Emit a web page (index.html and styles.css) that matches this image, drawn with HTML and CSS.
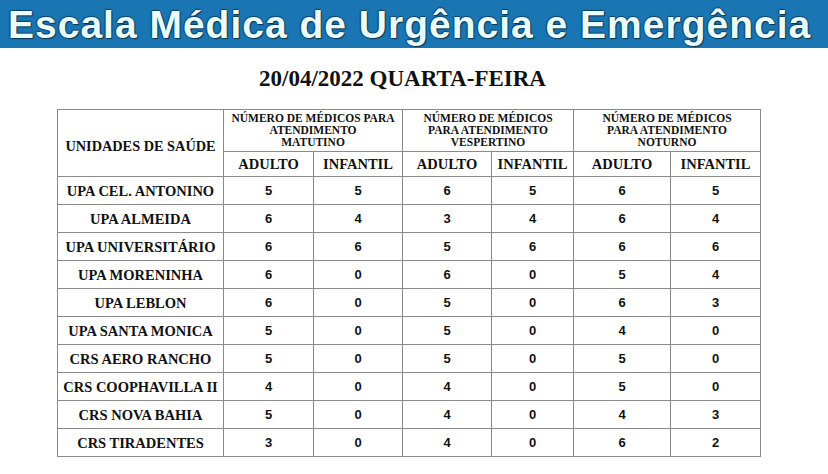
FILE: index.html
```html
<!DOCTYPE html>
<html lang="pt-BR">
<head>
<meta charset="utf-8">
<title>Escala Médica de Urgência e Emergência</title>
<link rel="stylesheet" href="styles.css">
</head>
<body>
<header class="banner"><h1 class="banner-title">Escala Médica de Urgência e Emergência</h1></header>
<main class="content">
  <h2 class="date">20/04/2022 QUARTA-FEIRA</h2>
  <table class="grid">
    <colgroup>
      <col class="c-unit"><col class="c-a1"><col class="c-i1"><col class="c-a2"><col class="c-i2"><col class="c-a3"><col class="c-i3">
    </colgroup>
    <thead>
      <tr class="r-group">
        <th rowspan="2" class="h-unit">UNIDADES DE SAÚDE</th>
        <th colspan="2" class="h-group">NÚMERO DE MÉDICOS PARA<br>ATENDIMENTO<br>MATUTINO</th>
        <th colspan="2" class="h-group">NÚMERO DE MÉDICOS<br>PARA ATENDIMENTO<br>VESPERTINO</th>
        <th colspan="2" class="h-group">NÚMERO DE MÉDICOS<br>PARA ATENDIMENTO<br>NOTURNO</th>
      </tr>
      <tr class="r-sub">
        <th>ADULTO</th><th>INFANTIL</th><th>ADULTO</th><th>INFANTIL</th><th>ADULTO</th><th>INFANTIL</th>
      </tr>
    </thead>
    <tbody>
      <tr><th>UPA CEL. ANTONINO</th><td>5</td><td>5</td><td>6</td><td>5</td><td>6</td><td>5</td></tr>
      <tr><th>UPA ALMEIDA</th><td>6</td><td>4</td><td>3</td><td>4</td><td>6</td><td>4</td></tr>
      <tr><th>UPA UNIVERSITÁRIO</th><td>6</td><td>6</td><td>5</td><td>6</td><td>6</td><td>6</td></tr>
      <tr><th>UPA MORENINHA</th><td>6</td><td>0</td><td>6</td><td>0</td><td>5</td><td>4</td></tr>
      <tr><th>UPA LEBLON</th><td>6</td><td>0</td><td>5</td><td>0</td><td>6</td><td>3</td></tr>
      <tr><th>UPA SANTA MONICA</th><td>5</td><td>0</td><td>5</td><td>0</td><td>4</td><td>0</td></tr>
      <tr><th>CRS AERO RANCHO</th><td>5</td><td>0</td><td>5</td><td>0</td><td>5</td><td>0</td></tr>
      <tr><th>CRS COOPHAVILLA II</th><td>4</td><td>0</td><td>4</td><td>0</td><td>5</td><td>0</td></tr>
      <tr><th>CRS NOVA BAHIA</th><td>5</td><td>0</td><td>4</td><td>0</td><td>4</td><td>3</td></tr>
      <tr><th>CRS TIRADENTES</th><td>3</td><td>0</td><td>4</td><td>0</td><td>6</td><td>2</td></tr>
    </tbody>
  </table>
</main>
</body>
</html>
```
FILE: styles.css
```css
html, body {
  margin: 0;
  padding: 0;
  background: #ffffff;
}
body {
  width: 828px;
  height: 474px;
  overflow: hidden;
  color: #111;
}
.banner {
  height: 48px;
  background: #1a75b3;
  display: flex;
  align-items: center;
  padding-left: 8px;
}
.banner-title {
  margin: 0;
  font-family: "Liberation Sans", Arial, sans-serif;
  font-weight: 700;
  font-size: 39px;
  line-height: 1;
  color: #e9fcfb;
  letter-spacing: 1px;
  white-space: nowrap;
  text-shadow: 1px 1px 1px #0b3350, -1px 0 1px #0e4166, 0 -1px 1px #0e4166;
}
.content {
  width: 703px;
  margin-left: 57px;
  padding-top: 19px;
}
.date {
  margin: 0 12px 18px 0;
  text-align: center;
  font-family: "Liberation Serif", "Times New Roman", serif;
  font-weight: 700;
  font-size: 23px;
  line-height: 24px;
}
.grid {
  border-collapse: collapse;
  table-layout: fixed;
  width: 703px;
}
.c-unit { width: 166px; }
.c-a1 { width: 90px; }
.c-i1 { width: 89px; }
.c-a2 { width: 89px; }
.c-i2 { width: 82px; }
.c-a3 { width: 97px; }
.c-i3 { width: 90px; }
.grid th, .grid td {
  border: 1px solid #8a8a8a;
  padding: 0;
  text-align: center;
  vertical-align: middle;
  line-height: 16px;
}
.grid th {
  font-family: "Liberation Serif", "Times New Roman", serif;
  font-weight: 700;
  font-size: 14.5px;
  white-space: nowrap;
}
.grid td {
  font-family: "Liberation Sans", Arial, sans-serif;
  font-weight: 700;
  font-size: 13px;
}
.r-group { height: 42px; }
.grid .h-group {
  font-size: 11.5px;
  line-height: 12px;
  padding: 2px 0 3px;
}
.grid .h-unit { font-size: 14.3px; padding-top: 6px; }
.r-sub { height: 25px; }
.grid .r-sub th { font-size: 14.5px; }
tbody tr { height: 28px; }
```
